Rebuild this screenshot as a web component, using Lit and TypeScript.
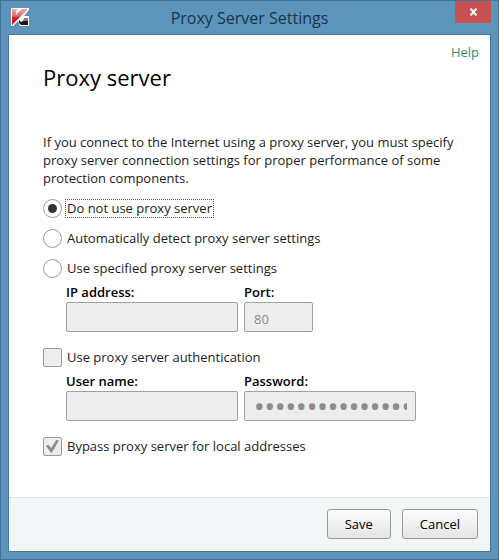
import { LitElement, html, css, svg } from "lit";
import { customElement, state } from "lit/decorators.js";

const modes = [
  { id: "none", label: "Do not use proxy server" },
  { id: "auto", label: "Automatically detect proxy server settings" },
  { id: "manual", label: "Use specified proxy server settings" },
];

const logo = svg`
  <svg class="logo" viewBox="0 0 20 20" aria-hidden="true">
    <defs>
      <linearGradient id="red" x1="0" y1="0" x2="0" y2="1">
        <stop offset="0" stop-color="#efb0b0" />
        <stop offset="0.45" stop-color="#e0686a" />
        <stop offset="0.55" stop-color="#cc1f26" />
        <stop offset="1" stop-color="#d0161c" />
      </linearGradient>
    </defs>
    <path fill="#fff" d="M1 1H19V3L14 9L19 9V19H10L8 14L3 19H1Z" />
    <path fill="url(#red)" d="M2 2H7L8 5L12 2H18L9 11L2 18Z" />
    <path fill="#fff" d="M7 2H8L9 4L6 8L6 6Z" />
    <path fill="#8f7d7d" d="M14 11H18V14H13Z" />
    <path fill="#17191c" d="M9 13L11 15L13 14H18V18H11L9 16Z" />
  </svg>`;

@customElement("app-root")
export class AppRoot extends LitElement {
  @state() private mode = "none";

  static styles = css`
    :host {
      display: block;
      font: 13px/18px "Open Sans", "Noto Sans", sans-serif;
      color: #1c1c1c;
    }
    * {
      box-sizing: border-box;
    }
    .window {
      display: flex;
      flex-direction: column;
      min-height: 100vh;
      padding: 0 7px 7px;
      background: #5c94bc;
      border: 1px solid #41749c;
    }
    .titlebar {
      display: grid;
      grid-template-columns: 36px 1fr 36px;
      height: 33px;
    }
    .logo {
      width: 20px;
      height: 20px;
      margin: 6px 0 0 2px;
    }
    .title {
      margin: 0;
      font-size: 16px;
      font-weight: 400;
      line-height: 34px;
      text-align: center;
      color: #17364d;
    }
    .close {
      display: grid;
      place-items: center;
      width: 36px;
      height: 22px;
      padding: 0;
      border: 0;
      background: #c75050;
    }
    .panel {
      display: flex;
      flex: 1;
      flex-direction: column;
      background: #fff;
      border: 1px solid #44779d;
    }
    .content {
      display: flex;
      flex: 1;
      flex-direction: column;
      padding: 8px 24px 24px 34px;
    }
    .help {
      align-self: flex-end;
      margin-right: -13px;
      color: #2b9075;
      text-decoration: none;
    }
    h2 {
      margin: 0 0 40px;
      font-size: 22px;
      font-weight: 400;
      line-height: 32px;
      color: #000;
    }
    p {
      margin: 0 0 12px;
    }
    .option {
      display: flex;
      align-items: center;
      gap: 3px;
      height: 18px;
      margin-bottom: 12px;
    }
    .option span {
      padding: 0 1px;
      border: 1px dotted transparent;
      line-height: 17px;
      white-space: nowrap;
    }
    .option .focused {
      border-color: #3a5f78;
    }
    .tick {
      display: grid;
      place-items: center;
      flex: none;
      width: 19px;
      height: 19px;
      margin: 0;
      appearance: none;
      border: 1px solid #999;
      background: #fff;
    }
    .tick[type="radio"] {
      border-radius: 50%;
    }
    .tick[type="radio"]:checked::before {
      content: "";
      width: 9px;
      height: 9px;
      border-radius: 50%;
      background: #333;
    }
    .tick[type="checkbox"] {
      border-radius: 2px;
      background: #ededed;
    }
    .tick[type="checkbox"]:checked::before {
      content: "";
      width: 13px;
      height: 13px;
      background: #8c8c8c;
      clip-path: polygon(0 48%, 18% 40%, 40% 66%, 78% 4%, 100% 8%, 46% 100%, 36% 100%);
    }
    .fields {
      display: flex;
      gap: 6px;
      margin: -6px 0 16px 23px;
    }
    .field {
      display: flex;
      flex-direction: column;
      gap: 1px;
      flex: 0 1 172px;
      min-width: 0;
    }
    .short {
      flex-basis: 69px;
    }
    .field label {
      font-weight: 600;
      color: #000;
    }
    .field input {
      width: 100%;
      height: 30px;
      padding: 3px 8px 0 9px;
      border: 1px solid #a0a0a0;
      border-radius: 2px;
      background: #ededed;
      color: #8c8c8c;
      font: inherit;
    }
    .field input[type="password"] {
      padding-top: 0;
      font-family: "Noto Sans", sans-serif;
      font-size: 28px;
    }
    .footer {
      display: flex;
      justify-content: flex-end;
      gap: 11px;
      padding: 11px 12px 12px;
      border-top: 1px solid #dbe6e6;
      background: #f2f6f6;
    }
    .footer button {
      min-width: 64px;
      height: 30px;
      padding: 0 17px;
      border: 1px solid #999;
      border-radius: 3px;
      background: linear-gradient(#fdfdfd, #e4e4e4);
      color: #000;
      font: inherit;
    }
  `;

  private radio(option: { id: string; label: string }) {
    const checked = this.mode === option.id;
    return html`
      <label class="option">
        <input class="tick" type="radio" name="mode" .checked=${checked}
          @change=${() => (this.mode = option.id)} />
        <span class=${checked ? "focused" : ""}>${option.label}</span>
      </label>`;
  }

  render() {
    return html`
      <div class="window">
        <header class="titlebar">
          ${logo}
          <h1 class="title">Proxy Server Settings</h1>
          <button class="close" aria-label="Close">
            <svg width="9" height="8" viewBox="0 0 9 8">
              <path d="M1.5 0.5L7.5 7.5M7.5 0.5L1.5 7.5" stroke="#fff" stroke-width="2" />
            </svg>
          </button>
        </header>
        <form class="panel" @submit=${(e: Event) => e.preventDefault()}>
          <div class="content">
            <a class="help" href="#help">Help</a>
            <h2>Proxy server</h2>
            <p>
              If you connect to the Internet using a proxy server, you must specify
              proxy server connection settings for proper performance of some
              protection components.
            </p>
            ${modes.map((m) => this.radio(m))}
            <div class="fields">
              <div class="field">
                <label for="ip">IP address:</label>
                <input id="ip" type="text" disabled />
              </div>
              <div class="field short">
                <label for="port">Port:</label>
                <input id="port" type="text" value="80" disabled />
              </div>
            </div>
            <label class="option">
              <input class="tick" type="checkbox" disabled />
              <span>Use proxy server authentication</span>
            </label>
            <div class="fields">
              <div class="field">
                <label for="user">User name:</label>
                <input id="user" type="text" disabled />
              </div>
              <div class="field">
                <label for="password">Password:</label>
                <input id="password" type="password" value="passwordpassword" disabled />
              </div>
            </div>
            <label class="option">
              <input class="tick" type="checkbox" checked disabled />
              <span>Bypass proxy server for local addresses</span>
            </label>
          </div>
          <footer class="footer">
            <button type="submit">Save</button>
            <button type="button">Cancel</button>
          </footer>
        </form>
      </div>`;
  }
}
